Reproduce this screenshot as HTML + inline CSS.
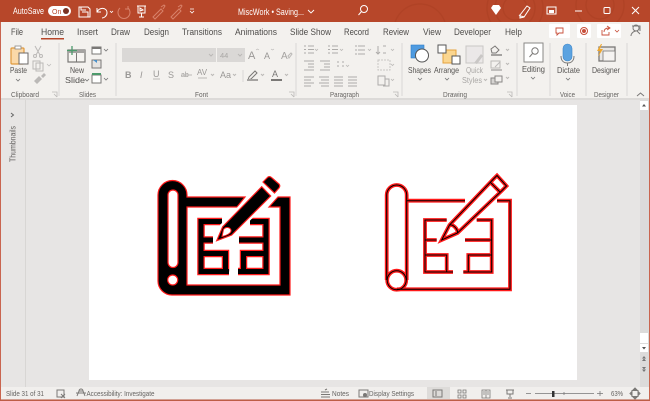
<!DOCTYPE html>
<html><head><meta charset="utf-8"><style>
html,body{margin:0;padding:0;width:650px;height:401px;overflow:hidden;background:#e7e5e4}
svg{display:block}
text{font-family:"Liberation Sans",sans-serif;fill:#555351;font-size:8.5px}
.t{font-size:9.5px;fill:#4f4d4b}
.g{font-size:7.5px;fill:#656361}
.w{fill:#fff;font-size:9px}
.d{fill:#a9a7a5}
.i{fill:none;stroke:#7a7876;stroke-width:1}
.f{fill:none;stroke:#bbb9b7;stroke-width:1}
.h{fill:none;stroke:#fff;stroke-width:1}
.c{fill:none;stroke:#777;stroke-width:.8}
</style></head><body>
<svg width="650" height="401" viewBox="0 0 650 401" xmlns="http://www.w3.org/2000/svg">
<defs><filter id="b" x="0" y="0" width="100%" height="100%"><feGaussianBlur stdDeviation="0.35"/></filter></defs>
<rect width="650" height="401" fill="#e7e5e4"/>
<g filter="url(#b)">
<!-- title bar -->
<rect width="650" height="22" fill="#b7472a"/>
<g fill="none" stroke="#ad4225" stroke-width="1.500" opacity=".6">
<circle cx="515" cy="8" r="12"/><circle cx="515" cy="8" r="20"/><circle cx="515" cy="8" r="28"/>
<circle cx="600" cy="5" r="14"/><circle cx="600" cy="5" r="24"/><circle cx="420" cy="30" r="26"/></g>
<text class="w" x="13" y="14" textLength="31" lengthAdjust="spacingAndGlyphs">AutoSave</text>
<rect x="48" y="6" width="23" height="10" rx="5" fill="#fff"/>
<text x="52" y="14" style="font-size:7px;fill:#b7472a">On</text>
<circle cx="66" cy="11" r="3" fill="#7a3020"/>
<path class="h" d="M79 7h9l2 2v8h-11z"/><path class="h" d="M82 12h6v5M81 7v3h5"/>
<path class="h" d="M97 8v4h4M97 12c2-5 10-5 10 1 0 3-3 5-5 5"/><path class="h" d="M110 11l1.500 1.500 1.500-1.500" style="stroke-width:.8"/>
<path class="h" d="M137 6h9M138 6v7h7V6M141.500 13v4M139 17h5M140 8l3 2-3 1z"/>
<path class="h" d="M190 9h4M190 11l2 2 2-2" style="stroke-width:.8"/>
<g fill="none" stroke="#d8826b" stroke-width="1"><path d="M120 8a6 6 0 1 0 8 0M128 6v3h-3"/><path d="M153 17l8-8 2 2-8 8zM161 7l3-2 1 1-2 3"/><path d="M171 17l8-8 2 2-8 8zM178 7l3-2 1 1-2 3"/></g>
<text class="w" x="238" y="15" textLength="66" lengthAdjust="spacingAndGlyphs">MiscWork • Saving...</text>
<path class="h" d="M308 10l3 3 3-3" style="stroke-width:.9"/>
<circle cx="364" cy="9" r="3.500" class="h"/><path class="h" d="M361.500 11.500l-3 3.500"/>
<path d="M491 8l2-3h6l2 3-5 7z" fill="#fff"/>
<path class="h" d="M520 15l7-9 3 2-6 9-4 1zM519 15c2 2 4 1 5 2"/>
<rect x="547" y="7" width="9" height="7" class="h"/><path d="M549 10h5v3h-5z" fill="#fff"/>
<path class="h" d="M575 11h7"/><rect x="604" y="7.500" width="6" height="6" rx="1" class="h"/>
<path class="h" d="M632 7l7 7M639 7l-7 7"/>
<!-- tabs + ribbon -->
<rect x="1" y="22" width="648" height="76" fill="#f3f1ee"/>
<rect y="98" width="650" height="2" fill="#dcdad8"/>
<text class="t" x="11" y="35" textLength="12" lengthAdjust="spacingAndGlyphs">File</text>
<text class="t" x="41" y="35" textLength="23" lengthAdjust="spacingAndGlyphs">Home</text>
<text class="t" x="77" y="35" textLength="21" lengthAdjust="spacingAndGlyphs">Insert</text>
<text class="t" x="111" y="35" textLength="19" lengthAdjust="spacingAndGlyphs">Draw</text>
<text class="t" x="144" y="35" textLength="25" lengthAdjust="spacingAndGlyphs">Design</text>
<text class="t" x="182" y="35" textLength="40" lengthAdjust="spacingAndGlyphs">Transitions</text>
<text class="t" x="235" y="35" textLength="42" lengthAdjust="spacingAndGlyphs">Animations</text>
<text class="t" x="290" y="35" textLength="41" lengthAdjust="spacingAndGlyphs">Slide Show</text>
<text class="t" x="344" y="35" textLength="25" lengthAdjust="spacingAndGlyphs">Record</text>
<text class="t" x="383" y="35" textLength="26" lengthAdjust="spacingAndGlyphs">Review</text>
<text class="t" x="423" y="35" textLength="18" lengthAdjust="spacingAndGlyphs">View</text>
<text class="t" x="454" y="35" textLength="37" lengthAdjust="spacingAndGlyphs">Developer</text>
<text class="t" x="505" y="35" textLength="17" lengthAdjust="spacingAndGlyphs">Help</text>
<rect x="41" y="38" width="23" height="1.500" fill="#b7472a"/>
<rect x="549" y="24" width="21" height="14" rx="1" fill="#fff"/><path d="M556 28h7v5h-4l-2 2v-2h-1z" fill="none" stroke="#c8503a" stroke-width=".9"/>
<rect x="577" y="24" width="14" height="14" rx="1" fill="#fff"/><circle cx="584" cy="31" r="3.500" fill="none" stroke="#c8503a"/><circle cx="584" cy="31" r="2" fill="#c8503a"/>
<rect x="597" y="24" width="24" height="14" rx="1" fill="#fff"/><path d="M602 30v5h7v-3M604 32c0-3 2-4 5-4M607 26l3 2-3 2" fill="none" stroke="#c8503a" stroke-width=".9"/><path d="M615 30l2 2 2-2" class="c" style="stroke:#c8503a"/>
<circle cx="636" cy="28" r="3" class="i"/><path class="i" d="M631 36c0-3 3-5 5-5M632 26h8v5M640 34l-3-3"/>
<!-- separators -->
<path d="M59 43v53M116 43v53M296 43v53M402 43v53M517 43v53M550 43v53M586 43v53M627 43v53" stroke="#dad8d6" stroke-width="1"/>
<!-- clipboard -->
<rect x="11" y="48" width="13" height="16" rx="1" fill="#fbd9a8" stroke="#e09a3e" stroke-width="1.200"/>
<rect x="15" y="46" width="6" height="3" fill="#fff" stroke="#8a8886" stroke-width=".8"/>
<rect x="19" y="53" width="9" height="11" fill="#fff" stroke="#6d6b69"/>
<text x="10" y="73" textLength="17" lengthAdjust="spacingAndGlyphs" style="font-size:8px">Paste</text>
<path class="c" d="M16 79l2 2 2-2"/>
<path class="f" d="M35 46l5 9M41 46l-5 9"/><circle cx="35" cy="56" r="1.500" class="f"/><circle cx="41" cy="56" r="1.500" class="f"/>
<rect x="33" y="61" width="7" height="8" class="f"/><rect x="36" y="63" width="7" height="8" class="f"/><path class="f" d="M47 64l2 2 2-2" style="stroke-width:.7"/>
<path d="M34 81l5-5 3 3-5 5zM41 76l3-3 2 2-3 3z" fill="#bbb9b7"/>
<text class="g" x="11" y="97" textLength="28" lengthAdjust="spacingAndGlyphs">Clipboard</text>
<path class="f" d="M52 92h5v5M54 94l3 3" style="stroke-width:.8"/>
<!-- slides -->
<rect x="68" y="50" width="17" height="12" fill="#f6f4f1" stroke="#7a7876" stroke-width="1.200"/><path class="i" d="M76.500 50v12"/><rect x="68" y="50" width="17" height="3" fill="#a5a3a1"/>
<path d="M72 46v9M67 50.500h10" stroke="#4d9a6c" stroke-width="1.300"/>
<text x="70" y="73" textLength="14" lengthAdjust="spacingAndGlyphs" style="font-size:8px">New</text>
<text x="65" y="83" textLength="20" lengthAdjust="spacingAndGlyphs" style="font-size:8px">Slide</text><path class="c" d="M85 79l2 2 2-2"/>
<rect x="92" y="47" width="9" height="7" fill="#fff" stroke="#7a7876"/><rect x="92" y="47" width="9" height="2" fill="#7a7876"/><path class="c" d="M104 49l2 2 2-2"/>
<rect x="92" y="60" width="9" height="8" fill="#e6e4e2" stroke="#7a7876"/><path d="M93 60h4v3z" fill="#4a90c9"/>
<rect x="92" y="75" width="9" height="8" fill="#fff" stroke="#7a7876"/><rect x="92" y="73" width="9" height="2" fill="#4d9a6c"/><path class="c" d="M104 78l2 2 2-2"/>
<text class="g" x="79" y="97" textLength="17" lengthAdjust="spacingAndGlyphs">Slides</text>
<!-- font -->
<rect x="122" y="48" width="94" height="14" fill="#dad8d6"/><rect x="217" y="48" width="28" height="14" fill="#dad8d6"/>
<path class="f" d="M209 54l2 2 2-2M238 54l2 2 2-2"/><text class="d" x="220" y="58" style="font-size:7.500px">44</text>
<text x="248" y="59" style="font-size:11px;fill:#9a9896">A</text><text x="264" y="59" style="font-size:9px;fill:#9a9896">A</text>
<path class="f" d="M256 50l1.500-1 1.500 1M271 49l1.500 1 1.500-1" style="stroke-width:.7"/>
<text x="281" y="59" style="font-size:10px;fill:#a5a3a1">A</text><path class="f" d="M288 56l3-3 1 1-3 4z"/>
<text x="125" y="78" style="font-size:9px;font-weight:bold;fill:#9a9896">B</text>
<text x="140" y="78" style="font-size:9px;font-style:italic;fill:#9a9896">I</text>
<text x="153" y="77" style="font-size:9px;fill:#9a9896">U</text><path class="f" d="M153 79h7"/>
<text x="168" y="78" style="font-size:9px;fill:#9a9896">S</text>
<text x="181" y="77" style="font-size:7px;fill:#9a9896">ab</text><path class="f" d="M181 75h11"/>
<text x="197" y="75" style="font-size:8px;fill:#9a9896">AV</text><path class="f" d="M198 78h9"/><path class="f" d="M211 74l1.500 1.500 1.500-1.500"/>
<text x="220" y="78" style="font-size:9px;fill:#9a9896">Aa</text><path class="f" d="M233 74l1.500 1.500 1.500-1.500"/>
<path d="M243 70v12" stroke="#dad8d6"/>
<path class="i" d="M249 77l6-6 2 2-6 6-3 1z"/><path d="M247 80h11" stroke="#a5a3a1" stroke-width="2"/><path class="f" d="M261 74l1.500 1.500 1.500-1.500"/>
<text x="272" y="77" style="font-size:9px;fill:#7a7876">A</text><path d="M271 80h11" stroke="#7a7876" stroke-width="2"/><path class="f" d="M285 74l1.500 1.500 1.500-1.500"/>
<text class="g" x="195" y="97" textLength="13" lengthAdjust="spacingAndGlyphs">Font</text>
<path class="f" d="M289 92h5v5M291 94l3 3" style="stroke-width:.8"/>
<!-- paragraph -->
<g stroke="#aeacaa" stroke-width="1" fill="none">
<path d="M304 46h2M308 46h6M304 49.500h2M308 49.500h6M304 53h2M308 53h6"/>
<path d="M328 46h2M332 46h6M328 49.500h2M332 49.500h6M328 53h2M332 53h6"/>
<path d="M355 46h2M358 46h7M355 50h2M358 50h7M355 54h2M358 54h7"/>
<path d="M378 46v8M376 52l2 2 2-2M383 46h3M383 53h3"/>
<path d="M304 61h10M308 64h6M308 67h6M304 70h10M320 61h10M324 64h6M324 67h6M320 70h10"/>
<path d="M337 62h2M337 66h2M342 62h2M342 66h2"/><path d="M378 60h12v10h-12z" stroke="#c8c6c4" stroke-dasharray="2 1"/>
<path d="M304 77h10M304 80h7M304 83h10M304 86h7"/><path d="M319 77h10M321 80h8M319 83h10M321 86h8"/><path d="M334 77h9M334 80h9M334 83h9M334 86h9"/><path d="M348 77h9M348 80h9M348 83h9M348 86h9"/>
<path d="M378 76h7v9h-7zM385 79h4v7h-6"/></g>
<path class="f" d="M315 49l1.500 1.500 1.500-1.500M340 49l1.500 1.500 1.500-1.500M368 49l1.500 1.500 1.500-1.500M391 49l1.500 1.500 1.500-1.500M346 65l1.500 1.500 1.500-1.500M391 64l1.500 1.500 1.500-1.500M391 79l1.500 1.500 1.500-1.500" style="stroke-width:.8"/>
<text class="g" x="330" y="97" textLength="29" lengthAdjust="spacingAndGlyphs">Paragraph</text>
<path class="f" d="M393 92h5v5M395 94l3 3" style="stroke-width:.8"/>
<!-- drawing -->
<rect x="411" y="45" width="13" height="13" fill="#4f9be0" stroke="#2f7fc8" stroke-width=".6"/>
<circle cx="422" cy="55.500" r="6.500" fill="#fff" stroke="#555" stroke-width="1"/>
<text x="408" y="73" textLength="23" lengthAdjust="spacingAndGlyphs" style="font-size:8.300px">Shapes</text><path class="c" d="M418 78l2 2 2-2"/>
<rect x="443" y="50" width="13" height="13" fill="#fbd68f" stroke="#e6a23c"/><rect x="438" y="45" width="8" height="8" fill="#fff" stroke="#555"/><rect x="452" y="56" width="8" height="8" fill="#fff" stroke="#555"/>
<text x="434" y="73" textLength="25" lengthAdjust="spacingAndGlyphs" style="font-size:8.300px">Arrange</text><path class="c" d="M445 78l2 2 2-2"/>
<rect x="466" y="46" width="17" height="17" fill="#ebe8e8" stroke="#c9c7c5"/><path d="M474 63l7-9 2 2-6 8z" fill="#c9c7c5"/>
<text class="d" x="466" y="73" textLength="17" lengthAdjust="spacingAndGlyphs" style="font-size:8px">Quick</text>
<text class="d" x="462" y="83" textLength="20" lengthAdjust="spacingAndGlyphs" style="font-size:8px">Styles</text><path class="f" d="M484 79l1.500 1.500 1.500-1.500"/>
<path class="i" d="M491 49l4-3 4 4-3 3h-4z"/><path d="M491 55h11" stroke="#8a8886" stroke-width="1.500"/>
<rect x="491" y="61" width="9" height="7" class="f"/><path class="f" d="M495 67l5-5"/><path d="M491 70h11" stroke="#a5a3a1" stroke-width="1.300"/>
<rect x="491" y="78" width="7" height="6" fill="#d6d4d2" stroke="#8a8886"/><rect x="495" y="76" width="7" height="6" fill="#f3f1ee" stroke="#8a8886"/>
<path class="f" d="M506 49l1.500 1.500 1.500-1.500M506 63l1.500 1.500 1.500-1.500M506 77l1.500 1.500 1.500-1.500"/>
<text class="g" x="443" y="97" textLength="24" lengthAdjust="spacingAndGlyphs">Drawing</text>
<path class="f" d="M507 92h5v5M509 94l3 3" style="stroke-width:.8"/>
<!-- editing -->
<rect x="524" y="43" width="19" height="19" fill="#fff" stroke="#8a8886"/>
<circle cx="535" cy="51" r="3.200" class="i"/><path class="i" d="M532.500 53.500l-3 3.500"/>
<text x="522" y="72" textLength="23" lengthAdjust="spacingAndGlyphs" style="font-size:8.300px">Editing</text><path class="c" d="M531 77l2 2 2-2"/>
<!-- voice -->
<rect x="563" y="44" width="9" height="17" rx="4.500" fill="#5ba3e0" stroke="#3f86c8" stroke-width=".6"/>
<path class="i" d="M561 56c0 5 3 7 6.500 7s6.500-2 6.500-7M567.500 63v3"/>
<text x="557" y="73" textLength="23" lengthAdjust="spacingAndGlyphs" style="font-size:8.300px">Dictate</text><path class="c" d="M566 78l2 2 2-2"/>
<text class="g" x="560" y="97" textLength="15" lengthAdjust="spacingAndGlyphs">Voice</text>
<!-- designer -->
<rect x="599" y="47" width="16" height="14" fill="#e8e6e4" stroke="#7a7876" stroke-width="1.300"/><rect x="603" y="51" width="12" height="10" fill="#f5f3f1" stroke="#7a7876" stroke-width=".8"/>
<path d="M601 44l-4 7h3l-2 6 5-8h-3l2-5z" fill="#efa72e"/>
<text x="592" y="73" textLength="28" lengthAdjust="spacingAndGlyphs" style="font-size:8.300px">Designer</text>
<text class="g" x="594" y="97" textLength="25" lengthAdjust="spacingAndGlyphs">Designer</text>
<path class="i" d="M637 96l3.500-3 3.500 3"/>
<!-- left pane -->
<rect x="25" y="100" width="1" height="287" fill="#d8d6d4"/>
<path d="M11 113l2.500 2-2.500 2" fill="none" stroke="#666"/>
<text transform="translate(15.500 162) rotate(-90)" style="font-size:8px;fill:#656361" textLength="36" lengthAdjust="spacingAndGlyphs">Thumbnails</text>
<!-- scrollbar -->
<rect x="640" y="100" width="9" height="287" fill="#dcdbda"/>
<rect x="640" y="101" width="8" height="9" fill="#fff"/><path d="M642 106.500h4l-2-2.500z" fill="#555"/>
<rect x="640" y="333" width="8" height="10" fill="#fff"/>
<rect x="640" y="344" width="8" height="8" fill="#fff"/><path d="M642 347h4l-2 2.500z" fill="#555"/>
<path d="M642 358.500h4l-2-2.500zM642 361h4l-2-2.500z" fill="#777"/><path d="M642 367h4l-2 2.500zM642 369.500h4l-2 2.500z" fill="#777"/>
<!-- status bar -->
<rect x="1" y="387" width="648" height="12" fill="#f1efed"/>
<text x="6" y="396" textLength="38" lengthAdjust="spacingAndGlyphs" style="font-size:7.500px;fill:#656361">Slide 31 of 31</text>
<rect x="57" y="390" width="7" height="7" class="i"/><path class="i" d="M61 394l4 4M65 394l-4 4"/>
<path class="i" d="M77 396l2-5h4l2 5M79 391a2 2 0 1 1 4 0M76 393h10"/>
<text x="86.500" y="396" textLength="68" lengthAdjust="spacingAndGlyphs" style="font-size:7.500px;fill:#656361">Accessibility: Investigate</text>
<path class="i" d="M321 392h8M321 394.500h9M321 397h9M325 390l2-1"/>
<text x="332" y="396" textLength="17" lengthAdjust="spacingAndGlyphs" style="font-size:7.500px;fill:#656361">Notes</text>
<rect x="359" y="390" width="9" height="7" class="i"/><circle cx="365" cy="395" r="2" fill="#7a7876"/>
<text x="369" y="396" textLength="45" lengthAdjust="spacingAndGlyphs" style="font-size:7.500px;fill:#656361">Display Settings</text>
<rect x="427" y="387" width="23" height="12" fill="#dddbd9"/>
<rect x="433" y="390" width="9" height="7" class="i"/><path class="i" d="M436 391v5"/>
<path class="i" d="M458 390h3v3h-3zM463 390h3v3h-3zM458 395h3v3h-3zM463 395h3v3h-3z" style="stroke-width:.8"/>
<path class="i" d="M482 390h8v8h-8zM486 390v8M483 392h2M483 394h2M487 392h2M487 394h2" style="stroke-width:.8"/>
<path class="i" d="M506 390h8M507 390v4h6v-4M510 394v3M508 398h4"/>
<path d="M526 393.500h5M535 393.500h59M597 393.500h6M600 391v5M564 392v3" stroke="#777" stroke-width=".8"/>
<rect x="552" y="391" width="2.500" height="6" fill="#333"/>
<text x="611" y="396" textLength="12" lengthAdjust="spacingAndGlyphs" style="font-size:7px;fill:#656361">63%</text>
<rect x="632" y="390.500" width="6" height="6" class="i"/><path class="i" d="M635 388l-1.500 1.500h3zM635 399l-1.500-1.500h3zM630 393.500l1.500-1.500v3zM640 393.500l-1.500-1.500v3z"/>
<!-- window border -->
<rect y="399.500" width="650" height="1.500" fill="#b7472a" opacity=".85"/>
<rect x="0" y="22" width="1" height="378" fill="#c9654f"/>
<rect x="649" y="22" width="1" height="378" fill="#c9654f"/>
</g>
<!-- slide -->
<rect x="89" y="105" width="488" height="275" fill="#fff"/>
<!-- left icon: filled -->
<path d="M187 197H245L237 207H187V285H280V207H269L278 197H290V295H172A14 14 0 0 1 158 281V195A14.500 14.500 0 0 1 187 195ZM168 195V262.500A5 5 0 0 0 178 262.500V195A5 5 0 0 0 168 195ZM172.700 275A5 5 0 1 0 172.700 285A5 5 0 1 0 172.700 275Z" fill-rule="evenodd" fill="#000" stroke="#ff1a1a" stroke-width="1.200"/>
<path d="M222 221.500H201V271.500H229M201 240H213M201 253.500H225.500V271.500M250 221.500H266V271.500H238M239 240H266M266 253.500H243.500V271.500" fill="none" stroke="#ff1a1a" stroke-width="7.500"/>
<path d="M222 221.500H201V271.500H229M201 240H213M201 253.500H225.500V271.500M250 221.500H266V271.500H238M239 240H266M266 253.500H243.500V271.500" fill="none" stroke="#000" stroke-width="5"/>
<path d="M214 243L220 225L261 183L274 196L233 238Z" fill="#fff"/>
<path d="M216.700 240.700L222.700 226.700L261.700 186.700L270.700 196L231.700 235Z" fill="#000" stroke="#ff1a1a" stroke-width="1.200"/>
<path d="M222 236.500L223.500 229.500C225.500 226.500 230 227 231 230C231.500 233 228 235 222 236.500Z" fill="#fff" stroke="#ff1a1a" stroke-width="1"/>
<path d="M263 182L268 177Q270 176 272 178L279 184Q280.500 186 279 188L274.500 193Z" fill="#000" stroke="#ff1a1a" stroke-width="1.200"/>
<!-- right icon: outline -->
<g fill="none" stroke="#ff1a1a" stroke-width="3.800">
<path d="M386.700 280V195A10 10 0 0 1 406.700 195V280M406.700 200.700H465M497 200.700H510V289.300H397"/>
<circle cx="396.700" cy="280.200" r="9.500"/>
<path d="M446.700 220H425V272H453M425 240H436.700M425 255H446.700V272M476.700 220H491.700V272H463.300M465 240H491.700M491.700 255H468.300V272"/>
<path d="M441.700 240L449.500 225L493.500 179L497 175.500L506.500 186L502 190.500L457.500 233ZM490 182L500 192M449.500 225C453 224 458 229 457.500 233"/>
</g>
<g fill="none" stroke="#000" stroke-width="1">
<path d="M386.700 280V195A10 10 0 0 1 406.700 195V280M406.700 200.700H465M497 200.700H510V289.300H397"/>
<circle cx="396.700" cy="280.200" r="9.500"/>
<path d="M446.700 220H425V272H453M425 240H436.700M425 255H446.700V272M476.700 220H491.700V272H463.300M465 240H491.700M491.700 255H468.300V272"/>
<path d="M441.700 240L449.500 225L493.500 179L497 175.500L506.500 186L502 190.500L457.500 233ZM490 182L500 192M449.500 225C453 224 458 229 457.500 233"/>
</g>
</svg>
</body></html>
